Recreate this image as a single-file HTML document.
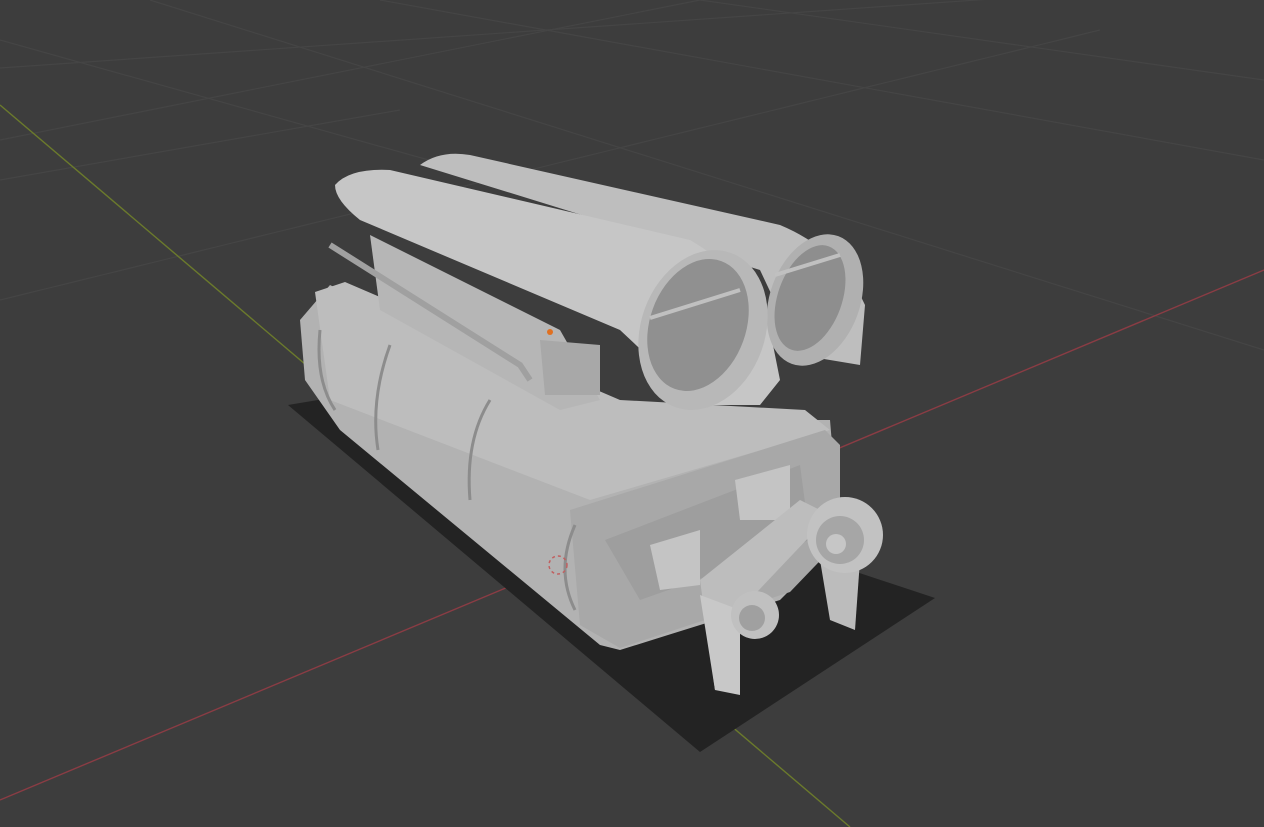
<!DOCTYPE html>
<html><head><meta charset="utf-8"><style>html,body{margin:0;padding:0;background:#3d3d3d;overflow:hidden}svg{display:block}</style></head>
<body>
<svg width="1264" height="827" viewBox="0 0 1264 827" xmlns="http://www.w3.org/2000/svg">
<rect width="1264" height="827" fill="#3d3d3d"/>
<g stroke="#454545" stroke-width="1.2" fill="none">
<line x1="0" y1="68" x2="1264" y2="-20"/>
<line x1="0" y1="140" x2="700" y2="0"/>
<line x1="0" y1="300" x2="1100" y2="30"/>
<line x1="380" y1="0" x2="1264" y2="160"/>
<line x1="700" y1="0" x2="1264" y2="80"/>
<line x1="150" y1="0" x2="1264" y2="350"/>
<line x1="0" y1="40" x2="500" y2="180"/>
<line x1="0" y1="180" x2="400" y2="110"/>
</g>
<line x1="0" y1="800" x2="1264" y2="270" stroke="#8a3c44" stroke-width="1.4"/>
<line x1="0" y1="105" x2="850" y2="827" stroke="#6b7a2c" stroke-width="1.4"/>
<polygon points="288,405 330,398 935,598 700,752" fill="#232323"/>
<polygon points="300,320 330,285 600,420 830,420 840,540 780,600 620,650 600,645 340,430 305,380" fill="#b2b2b2"/>
<polygon points="315,292 345,282 620,400 805,410 830,430 590,500 330,400" fill="#bdbdbd"/>
<polygon points="570,510 825,430 840,445 840,540 790,592 620,648 580,625" fill="#a8a8a8"/>
<polygon points="605,540 800,465 810,540 640,600" fill="#9e9e9e"/>
<g stroke="#8c8c8c" stroke-width="3" fill="none">
<path d="M320,330 Q315,380 335,410"/>
<path d="M390,345 Q370,400 378,450"/>
<path d="M490,400 Q465,440 470,500"/>
<path d="M575,525 Q555,570 575,610"/>
</g>
<polygon points="370,235 560,330 600,400 560,410 380,310" fill="#b6b6b6"/>
<polygon points="540,340 600,345 600,395 545,395" fill="#a8a8a8"/>
<path d="M330,245 L520,365 L530,380" stroke="#a0a0a0" stroke-width="6" fill="none"/>
<path d="M420,165 Q440,150 470,155 L780,225 Q840,250 865,305 L860,365 L800,355 L760,270 Z" fill="#bebebe"/>
<path d="M335,185 Q350,168 390,170 L690,240 Q750,275 770,330 L780,380 L760,405 L700,405 L620,330 L360,220 Q335,200 335,185 Z" fill="#c6c6c6"/>
<ellipse cx="815" cy="300" rx="45" ry="68" transform="rotate(20 815 300)" fill="#b0b0b0"/>
<ellipse cx="810" cy="298" rx="32" ry="55" transform="rotate(20 810 298)" fill="#8e8e8e"/>
<ellipse cx="703" cy="330" rx="62" ry="82" transform="rotate(20 703 330)" fill="#b8b8b8"/>
<ellipse cx="698" cy="325" rx="48" ry="68" transform="rotate(20 698 325)" fill="#909090"/>
<line x1="650" y1="318" x2="740" y2="290" stroke="#c0c0c0" stroke-width="4"/>
<line x1="775" y1="275" x2="840" y2="255" stroke="#c0c0c0" stroke-width="4"/>
<polygon points="650,545 700,530 700,585 660,590" fill="#c4c4c4"/>
<polygon points="735,480 790,465 790,520 740,520" fill="#c4c4c4"/>
<polygon points="700,580 800,500 830,515 740,610 730,690 715,690" fill="#bdbdbd"/>
<polygon points="820,560 860,560 855,630 830,620" fill="#bcbcbc"/>
<polygon points="700,595 740,610 740,695 715,690" fill="#c8c8c8"/>
<circle cx="845" cy="535" r="38" fill="#c2c2c2"/>
<circle cx="840" cy="540" r="24" fill="#a6a6a6"/>
<circle cx="836" cy="544" r="10" fill="#c6c6c6"/>
<circle cx="755" cy="615" r="24" fill="#c0c0c0"/>
<circle cx="752" cy="618" r="13" fill="#a0a0a0"/>
<circle cx="550" cy="332" r="3" fill="#e07020"/>
<circle cx="558" cy="565" r="9" fill="none" stroke="#c06060" stroke-width="1.5" stroke-dasharray="3 3"/>
</svg>
</body></html>
